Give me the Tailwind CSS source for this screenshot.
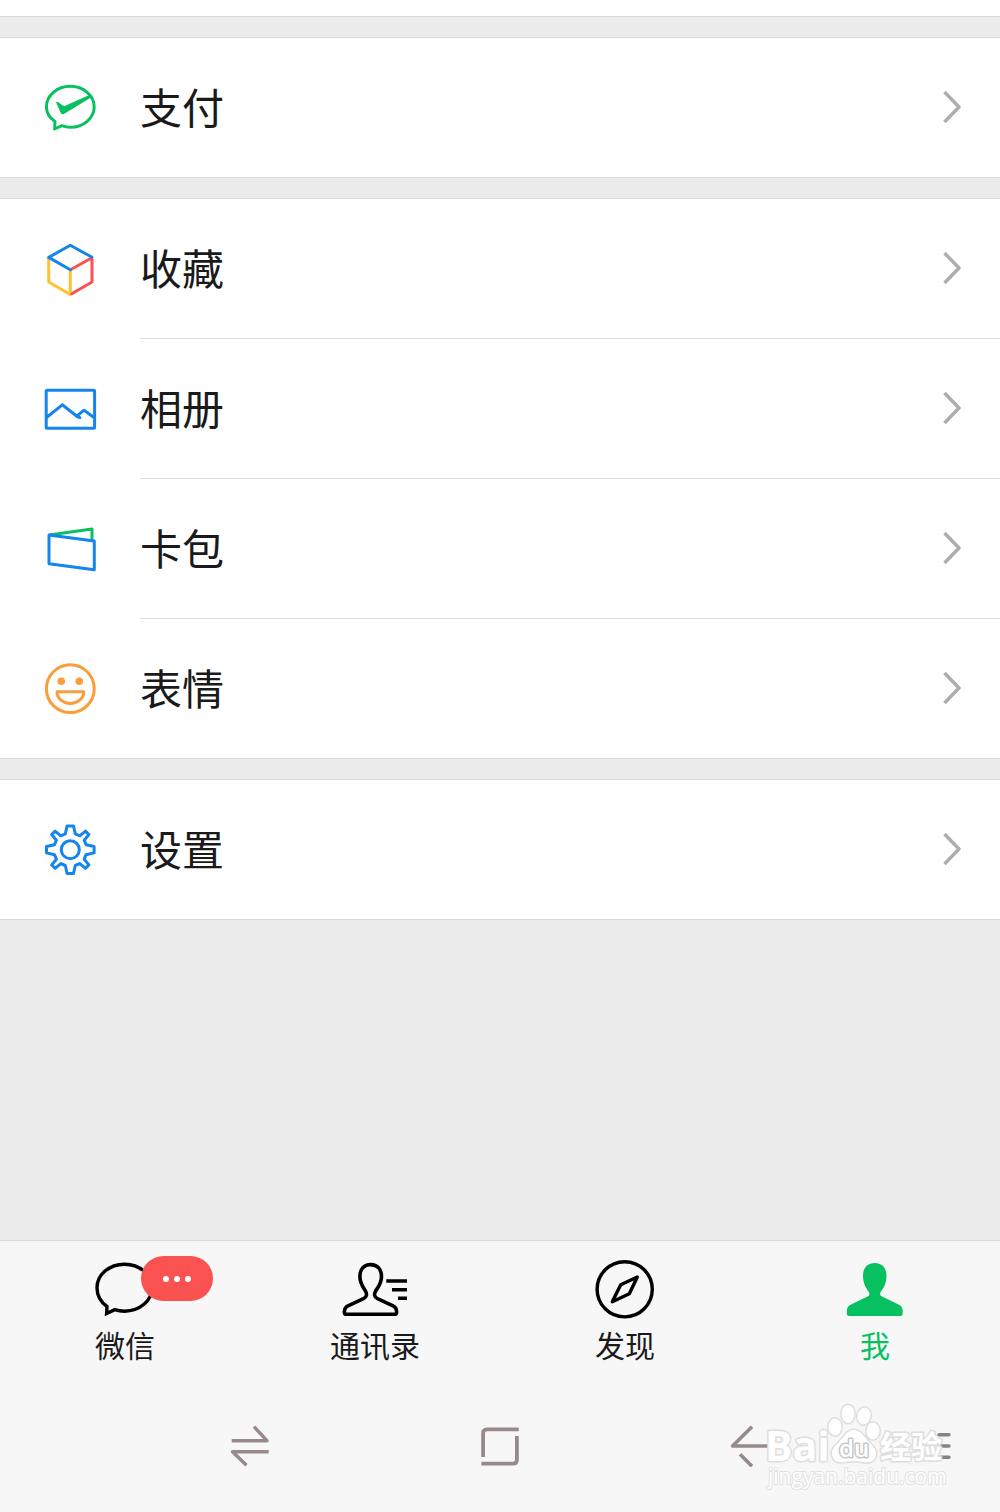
<!DOCTYPE html>
<html lang="zh-CN">
  <head>
    <meta charset="UTF-8" />
    <meta name="viewport" content="width=device-width, initial-scale=1.0" />
    <title>我</title>
    <script src="https://cdn.jsdelivr.net/npm/@tailwindcss/browser@4"></script>
  </head>
  <body
    class="min-h-screen flex flex-col bg-[#ececec] text-[#1a1a1a] font-['Noto_Sans_CJK_SC',sans-serif]"
  >
    <main class="flex-1 flex flex-col gap-5">
      <div class="h-[17px] bg-white border-b border-[#d9d9d9]"></div>

      <section class="bg-white border-y border-[#d9d9d9]">
        <a href="#pay" class="flex items-center h-[139px] pl-[43px] pr-[39px]">
          <svg class="w-[55px] h-[55px]" viewBox="0 0 55 55" fill="none" stroke="#07c160" stroke-width="3" stroke-linejoin="round">
            <path d="M12 41.5L11.6 49L18.8 45.7C21.5 46.7 24.4 47.3 27.3 47.3C40.5 47.3 51.2 38.1 51.2 26.8S40.5 6.3 27.3 6.3S3.4 15.5 3.4 26.8C3.4 32.7 6.8 38 12 41.5Z" />
            <path d="M13.2 22.4Q13.8 21.2 15 22L19.8 25.6Q21 26.4 22.2 25.8L46.3 15L48 17.5L20.9 34Q19 35.2 17.8 33Z" fill="#07c160" stroke="none" />
          </svg>
          <span class="flex-1 ml-[42px] pb-1 text-[42px] leading-[60px]">支付</span>
          <svg class="w-[18px] h-[34px] mb-px" viewBox="0 0 18 34" fill="none" stroke="#adadad" stroke-width="3.4" stroke-linejoin="round"><path d="M1.5 2L16 17L1.5 32" /></svg>
        </a>
      </section>

      <ul class="bg-white border-y border-[#d9d9d9]">
        <li>
          <a href="#favorites" class="flex items-center h-[139px] pl-[43px] pr-[39px]">
            <svg class="w-[55px] h-[55px]" viewBox="0 0 55 55" fill="none" stroke-width="3" stroke-linecap="round" stroke-linejoin="round">
              <path stroke="#ffc22e" d="M5.7 17.5V41L27.3 53.5V29.5" />
              <path stroke="#fa5151" d="M28.3 28.3L49 16.7V41L28.8 52.7" />
              <path stroke="#1485ee" d="M27.3 28.7L5.7 16.4L27.3 4.2L48.6 16" />
            </svg>
            <span class="flex-1 ml-[42px] pb-1 text-[42px] leading-[60px]">收藏</span>
            <svg class="w-[18px] h-[34px] mb-px" viewBox="0 0 18 34" fill="none" stroke="#adadad" stroke-width="3.4" stroke-linejoin="round"><path d="M1.5 2L16 17L1.5 32" /></svg>
          </a>
          <hr class="ml-[140px] border-[#dedede]" />
        </li>
        <li>
          <a href="#album" class="flex items-center h-[139px] pl-[43px] pr-[39px]">
            <svg class="w-[55px] h-[55px]" viewBox="0 0 55 55" fill="none" stroke="#1485ee" stroke-width="3" stroke-linejoin="round">
              <rect x="3.2" y="9.2" width="48.4" height="38" rx="1" />
              <path d="M3.5 36.5L19.3 23.8L34.5 35.8Q36.5 37 38 36.4" />
              <path d="M34 35L41 29.2L51.3 36.8" />
            </svg>
            <span class="flex-1 ml-[42px] pb-1 text-[42px] leading-[60px]">相册</span>
            <svg class="w-[18px] h-[34px] mb-px" viewBox="0 0 18 34" fill="none" stroke="#adadad" stroke-width="3.4" stroke-linejoin="round"><path d="M1.5 2L16 17L1.5 32" /></svg>
          </a>
          <hr class="ml-[140px] border-[#dedede]" />
        </li>
        <li>
          <a href="#cards" class="flex items-center h-[139px] pl-[43px] pr-[39px]">
            <svg class="w-[55px] h-[55px]" viewBox="0 0 55 55" fill="none" stroke-width="3" stroke-linejoin="round">
              <path stroke="#07c160" d="M6 14L49 8V20" />
              <path stroke="#1485ee" d="M6 14L51.3 20V48.7L6 42.7Z" />
            </svg>
            <span class="flex-1 ml-[42px] pb-1 text-[42px] leading-[60px]">卡包</span>
            <svg class="w-[18px] h-[34px] mb-px" viewBox="0 0 18 34" fill="none" stroke="#adadad" stroke-width="3.4" stroke-linejoin="round"><path d="M1.5 2L16 17L1.5 32" /></svg>
          </a>
          <hr class="ml-[140px] border-[#dedede]" />
        </li>
        <li>
          <a href="#stickers" class="flex items-center h-[139px] pl-[43px] pr-[39px]">
            <svg class="w-[55px] h-[55px]" viewBox="0 0 55 55" fill="none" stroke="#fa9d3b" stroke-width="3" stroke-linejoin="round">
              <circle cx="27.3" cy="27.7" r="23.9" />
              <circle cx="18.3" cy="20.2" r="3.8" fill="#fa9d3b" stroke="none" />
              <circle cx="36.3" cy="20.2" r="3.8" fill="#fa9d3b" stroke="none" />
              <path d="M14 30.7H40.7C40.7 37.7 34.5 42.5 27.3 42.5S14 37.7 14 30.7Z" />
            </svg>
            <span class="flex-1 ml-[42px] pb-1 text-[42px] leading-[60px]">表情</span>
            <svg class="w-[18px] h-[34px] mb-px" viewBox="0 0 18 34" fill="none" stroke="#adadad" stroke-width="3.4" stroke-linejoin="round"><path d="M1.5 2L16 17L1.5 32" /></svg>
          </a>
        </li>
      </ul>

      <section class="bg-white border-y border-[#d9d9d9]">
        <a href="#settings" class="flex items-center h-[139px] pl-[43px] pr-[39px]">
          <svg class="w-[55px] h-[55px]" viewBox="-27.3 -27.7 55 55" fill="none" stroke="#1485ee" stroke-width="3" stroke-linejoin="round">
            <circle r="9" />
            <path d="M-3.2 -23.8H3.2L5 -15.8L9.5 -13.9L15.2 -18.6L18.6 -15.2L13.9 -9.5L15.8 -5L23.8 -3.2V3.2L15.8 5L13.9 9.5L18.6 15.2L15.2 18.6L9.5 13.9L5 15.8L3.2 23.8H-3.2L-5 15.8L-9.5 13.9L-15.2 18.6L-18.6 15.2L-13.9 9.5L-15.8 5L-23.8 3.2V-3.2L-15.8 -5L-13.9 -9.5L-18.6 -15.2L-15.2 -18.6L-9.5 -13.9L-5 -15.8Z" />
          </svg>
          <span class="flex-1 ml-[42px] pb-1 text-[42px] leading-[60px]">设置</span>
          <svg class="w-[18px] h-[34px] mb-px" viewBox="0 0 18 34" fill="none" stroke="#adadad" stroke-width="3.4" stroke-linejoin="round"><path d="M1.5 2L16 17L1.5 32" /></svg>
        </a>
      </section>
    </main>

    <footer class="bg-[#f7f7f7] border-t border-[#d9d9d9]">
      <nav class="grid grid-cols-4 pt-4 h-[139px] text-[30px] leading-[38px]">
        <a href="#chats" class="flex flex-col items-center gap-1">
          <span class="relative">
            <svg class="w-[72px] h-16" viewBox="0 0 72 64" fill="none" stroke="#000" stroke-width="3.4">
              <path d="M18 49.5L17.6 56.5L25.8 52.7C28.8 53.7 32 54.2 35.5 54.2C50.7 54.2 63 43.7 63 30.7S50.7 7.2 35.5 7.2S8 17.7 8 30.7C8 38.3 11.8 45 18 49.5Z" />
            </svg>
            <span class="absolute -top-px left-[52px] w-[72px] h-[45px] rounded-full bg-[#fa5151] flex items-center justify-center gap-[5px]">
              <i class="size-1.5 rounded-full bg-white"></i>
              <i class="size-1.5 rounded-full bg-white"></i>
              <i class="size-1.5 rounded-full bg-white"></i>
            </span>
          </span>
          微信
        </a>
        <a href="#contacts" class="flex flex-col items-center gap-1">
          <svg class="w-[72px] h-16" viewBox="0 0 72 64" fill="none" stroke="#000" stroke-width="3.6">
            <path d="M31.7 7.6C24.8 7.6 20.9 12.5 20.9 19.5C20.9 26.5 24 30 26.4 33.8C28.3 37 27.8 40 24.5 41.6L9.5 48.6C6.5 50 5.4 51.5 5.4 54.5V55.2Q5.4 57.3 7.5 57.3H55.5Q57.6 57.3 57.6 55.2V54.5C57.6 51.5 56.5 50 53.5 48.6L38.5 41.6C35.2 40 34.8 37 36.7 33.8C39.2 30 42.5 26.5 42.5 19.5C42.5 12.5 38.6 7.6 31.7 7.6Z" />
            <path d="M47.3 24H68M53 32.7H68M59 41.3H68" />
          </svg>
          通讯录
        </a>
        <a href="#discover" class="flex flex-col items-center gap-1">
          <svg class="w-[72px] h-16" viewBox="0 0 72 64" fill="none" stroke="#000" stroke-width="3.4" stroke-linejoin="round">
            <circle cx="35.7" cy="32.3" r="27.6" />
            <path d="M48.3 20L31.7 27.7L23.3 44.7L40.3 36.7Z" />
          </svg>
          发现
        </a>
        <a href="#me" class="flex flex-col items-center gap-1 text-[#07c160]">
          <svg class="w-[72px] h-16" viewBox="0 0 72 64" fill="#07c160">
            <path d="M35.7 6C28 6 24 11.5 24 18.5C24 26 26.5 30.5 29.5 34.5C31 36.8 30.8 38.3 28.5 39.5L12.5 47.3C9 49 7.8 51 7.8 54V56.5Q7.8 59 10.3 59H61.2Q63.7 59 63.7 56.5V54C63.7 51 62.5 49 59 47.3L43 39.5C40.7 38.3 40.5 36.8 42 34.5C45 30.5 47.5 26 47.5 18.5C47.5 11.5 43.5 6 35.7 6Z" />
          </svg>
          我
        </a>
      </nav>

      <!-- system keys -->
      <div class="relative h-[132px] px-[12.5%] grid grid-cols-3 items-center justify-items-center">
        <button type="button" aria-label="切换">
          <svg class="w-10 h-[42px]" viewBox="0 0 40 42" fill="none" stroke="#968a8a" stroke-width="3.4" stroke-linejoin="round">
            <path d="M1.7 15.7H37L24 1.7M38.7 26.7H2.5L16.5 40.3" />
          </svg>
        </button>
        <button type="button" aria-label="主页">
          <svg class="w-10 h-[42px]" viewBox="0 0 40 42" fill="none" stroke="#968a8a" stroke-width="3.8">
            <path d="M38.7 4.3H7Q3.1 4.3 3.1 8.3V32M1.4 38.7H33Q36.9 38.7 36.9 34.7V11" />
          </svg>
        </button>
        <button type="button" aria-label="返回">
          <svg class="w-10 h-[42px]" viewBox="0 0 40 42" fill="none" stroke="#968a8a" stroke-width="3.6" stroke-linejoin="round">
            <path d="M40 21H2.5L22 1.7M10 29.3L22 41.3" />
          </svg>
        </button>
        <button type="button" aria-label="菜单" class="absolute right-[49px]">
          <svg class="w-5 h-[42px]" viewBox="0 0 20 42" fill="none" stroke="#858383" stroke-width="3.4" stroke-linecap="round">
            <path d="M8 9.7H18M8 21H18M8 32.2H18" />
          </svg>
        </button>

        <!-- watermark -->
        <svg class="absolute right-[50px] top-[22px] w-[186px] h-[90px]" viewBox="0 0 186 90" fill="#fff" stroke="#dedede" stroke-width="3" stroke-linejoin="round" paint-order="stroke" font-family="'Open Sans', sans-serif">
          <text x="1" y="59" font-size="41" font-weight="700">Bai</text>
          <ellipse cx="71" cy="25" rx="6.5" ry="8.5" />
          <ellipse cx="84" cy="12" rx="6.5" ry="9" />
          <ellipse cx="100" cy="14" rx="6.5" ry="8.5" transform="rotate(12 100 14)" />
          <ellipse cx="109" cy="29" rx="6.5" ry="8.5" />
          <path d="M90 28C83 28 81 34 75 40C69 46 66 50 69 55.500C72 62 79 60 84 59.500C88 59 92 59 96 59.500C102 61 109 61 111.500 55.500C113.500 49 110 45 105 40C99 34 97 28 90 28Z" />
          <text x="75" y="55" font-size="24" font-weight="600" stroke="#c6c6c6" stroke-width="3">du</text>
          <text x="116" y="56" font-size="31" font-weight="700" font-family="'Noto Sans CJK SC', sans-serif">经验</text>
          <text x="4" y="82" font-size="21" stroke="#e2e2e2" stroke-width="2">jingyan.baidu.com</text>
        </svg>
      </div>
    </footer>
  </body>
</html>
